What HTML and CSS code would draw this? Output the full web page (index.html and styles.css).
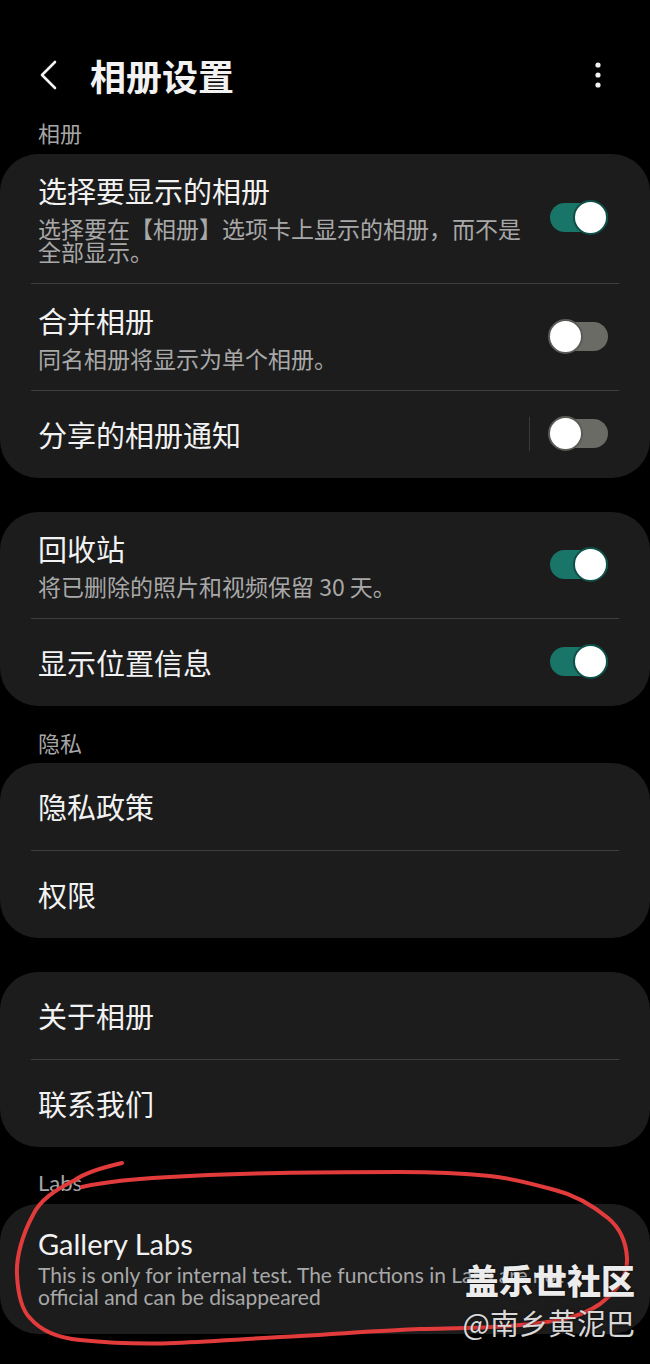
FILE: index.html
```html
<!DOCTYPE html>
<html lang="zh-CN">
<head>
    <meta charset="UTF-8">
    <meta name="viewport" content="width=device-width, initial-scale=1.0">
    <title>相册设置</title>
    <link rel="stylesheet" href="styles.css">
</head>
<body>
    <div class="page">
        <div class="appbar">
            <svg class="back" width="24" height="32" viewBox="0 0 24 32">
                <polyline points="17,3 4,16 17,29" fill="none" stroke="#f2f2f2" stroke-width="2.6" stroke-linecap="round" stroke-linejoin="round"/>
            </svg>
            <div class="title">相册设置</div>
            <svg class="more" width="8" height="28" viewBox="0 0 8 28">
                <circle cx="4" cy="4" r="2.6" fill="#f2f2f2"/>
                <circle cx="4" cy="14" r="2.6" fill="#f2f2f2"/>
                <circle cx="4" cy="24" r="2.6" fill="#f2f2f2"/>
            </svg>
        </div>

        <div class="section-label first">相册</div>
        <div class="card">
            <div class="row">
                <div class="row-text">
                    <div class="row-title">选择要显示的相册</div>
                    <div class="row-sub">选择要在【相册】选项卡上显示的相册，而不是全部显示。</div>
                </div>
                <div class="switch on"><span class="thumb"></span></div>
            </div>
            <div class="divider"></div>
            <div class="row">
                <div class="row-text">
                    <div class="row-title">合并相册</div>
                    <div class="row-sub">同名相册将显示为单个相册。</div>
                </div>
                <div class="switch"><span class="thumb"></span></div>
            </div>
            <div class="divider"></div>
            <div class="row">
                <div class="row-text">
                    <div class="row-title">分享的相册通知</div>
                </div>
                <div class="vsep"></div>
                <div class="switch"><span class="thumb"></span></div>
            </div>
        </div>

        <div class="card spaced">
            <div class="row">
                <div class="row-text">
                    <div class="row-title">回收站</div>
                    <div class="row-sub">将已删除的照片和视频保留 30 天。</div>
                </div>
                <div class="switch on"><span class="thumb"></span></div>
            </div>
            <div class="divider"></div>
            <div class="row">
                <div class="row-text">
                    <div class="row-title">显示位置信息</div>
                </div>
                <div class="switch on"><span class="thumb"></span></div>
            </div>
        </div>

        <div class="section-label">隐私</div>
        <div class="card">
            <div class="row">
                <div class="row-title">隐私政策</div>
            </div>
            <div class="divider"></div>
            <div class="row">
                <div class="row-title">权限</div>
            </div>
        </div>

        <div class="card spaced">
            <div class="row">
                <div class="row-title">关于相册</div>
            </div>
            <div class="divider"></div>
            <div class="row">
                <div class="row-title">联系我们</div>
            </div>
        </div>

        <div class="section-label latin">Labs</div>
        <div class="card labs">
            <div class="labs-title">Gallery Labs</div>
            <div class="labs-sub">This is only for internal test. The functions in Labs are not official and can be disappeared</div>
        </div>

        <!-- hand-drawn circle over the Labs entry -->
        <svg class="scribble" width="650" height="1364" viewBox="0 0 650 1364">
            <path d="M122,1163 C100,1168 82,1175 75,1180 C55,1190 40,1200 33,1215 C22,1235 16,1258 17,1275 C18,1295 22,1310 30,1318 C42,1332 58,1338 80,1340 C120,1344 150,1344 175,1343 C220,1341 260,1338 300,1336 C350,1333 390,1330 420,1329 C460,1328 495,1328 520,1325 C555,1322 580,1318 600,1304 C618,1290 628,1275 627,1258 C626,1240 620,1228 608,1218 C592,1205 575,1195 555,1190 C530,1183 510,1178 490,1176 C460,1173 430,1172 400,1172 C360,1172 320,1172 280,1173 C230,1174 180,1176 140,1179 C115,1181 95,1184 82,1187"
                  fill="none" stroke="#e23b3b" stroke-width="4" stroke-linecap="round"/>
        </svg>

        <div class="watermark">
            <div class="wm-main">盖乐世社区</div>
            <div class="wm-user">@南乡黄泥巴</div>
        </div>
    </div>
</body>
</html>
```

FILE: styles.css
```css
body { margin: 0; background: #000; font-family: "Noto Sans CJK SC", "Noto Sans", sans-serif; color: #f2f2f2; }
.page { position: relative; width: 650px; height: 1364px; overflow: hidden; }

.appbar { display: flex; align-items: center; height: 48px; padding: 51px 0 0 0; }
.back { margin-left: 38px; flex: none; }
.title { margin-left: 28px; font-size: 36px; font-weight: 700; line-height: 48px; flex: 1; }
.more { margin-right: 48px; flex: none; }

.section-label { padding: 22px 38px 7px; font-size: 22px; line-height: 28px; color: #a6a6a6; }
.section-label.first { padding-top: 19px; padding-bottom: 8px; }
.section-label.latin { font-family: "Lato", "Noto Sans", sans-serif; font-size: 22px; }

.card { background: #1c1c1c; border-radius: 38px; }
.card.spaced { margin-top: 34px; }

.row { display: flex; align-items: center; min-height: 87px; box-sizing: border-box; padding: 18px 42px 20px 38px; }
.row-text { flex: 1; min-width: 0; padding-right: 20px; }
.row-title { font-size: 29px; line-height: 36px; color: #f2f2f2; }
.row-sub { margin-top: 9px; font-size: 23px; line-height: 23px; color: #a8a8a8; }
.divider { height: 1px; background: #3e3e3e; margin: 0 31px; }
.vsep { width: 1px; height: 34px; background: #3a3a3a; margin-right: 20px; flex: none; }

.switch { position: relative; width: 58px; height: 35px; flex: none; }
.switch::before { content: ""; position: absolute; left: 0; right: 0; top: 3px; height: 29px; border-radius: 15px; background: #6b6b66; }
.switch .thumb { position: absolute; top: 0; left: -2px; width: 31px; height: 31px; border-radius: 50%; background: #fff; border: 2px solid #5a5a56; }
.switch.on::before { background: #187568; }
.switch.on .thumb { left: auto; right: 0; border-color: #0e5047; }

.labs { padding: 22px 38px 26px; }
.labs-title { font-family: "Lato", "Noto Sans", sans-serif; font-size: 29px; line-height: 36px; color: #f2f2f2; }
.labs-sub { margin-top: 2px; font-family: "Lato", "Noto Sans", sans-serif; font-size: 21px; line-height: 22px; color: #a8a8a8; }

.scribble { position: absolute; left: 0; top: 0; pointer-events: none; }

.watermark { position: absolute; right: 15px; top: 1258px; text-align: right; }
.wm-main { font-size: 34px; font-weight: 900; line-height: 44px; color: #ececec; text-shadow: 0 0 3px rgba(0, 0, 0, 0.6); }
.wm-user { font-size: 29px; line-height: 40px; color: #d8d8d8; text-shadow: 0 0 3px rgba(0, 0, 0, 0.6); }
```
